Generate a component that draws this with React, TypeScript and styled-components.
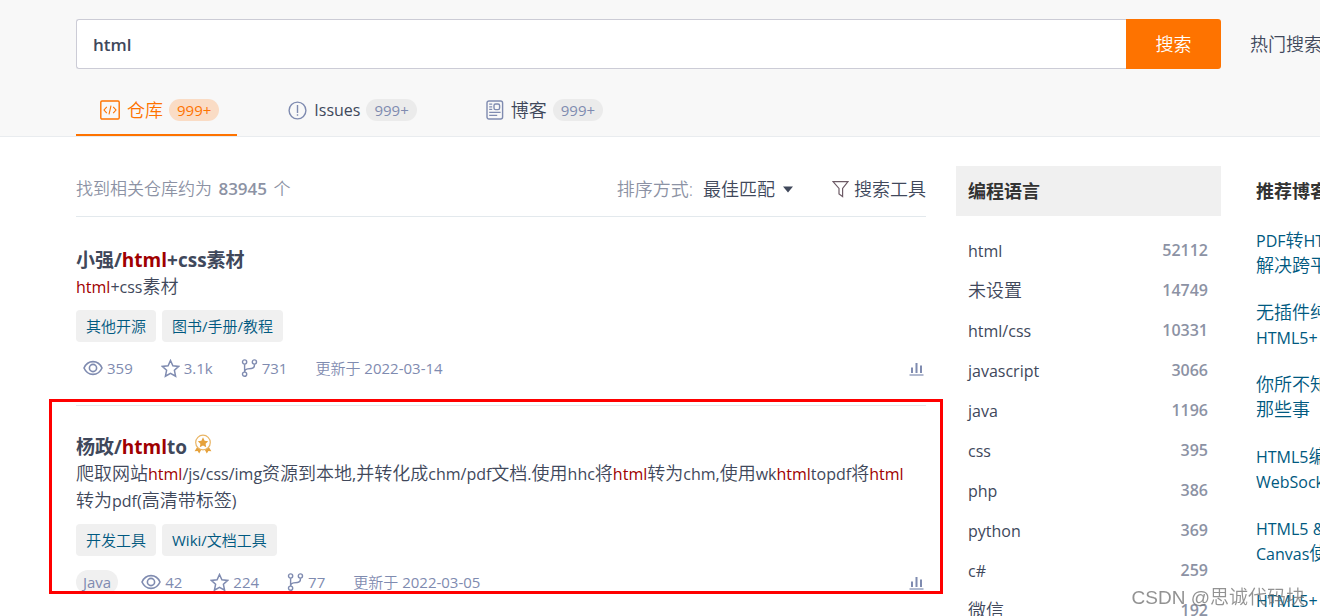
import React from "react";
import styled, { createGlobalStyle } from "styled-components";

const color = {
  ink: "#40485b",
  muted: "#8c92a4",
  slate: "#7f8bb0",
  orange: "#fe7300",
  link: "#005980",
  mark: "#a00000",
  line: "#e3e9ed",
  panel: "#f0f0f0",
};

const GlobalStyle = createGlobalStyle`
  *, *::before, *::after { box-sizing: border-box; }
  body {
    margin: 0;
    height: 100vh;
    overflow: hidden;
    background: #fff;
    color: ${color.ink};
    font-family: "Open Sans", "Noto Sans CJK SC", sans-serif;
    font-size: 18px;
    font-weight: 350;
    line-height: 24px;
  }
  a { color: inherit; text-decoration: none; }
  h2, h3, p, ul { margin: 0; padding: 0; }
  ul { list-style: none; }
  svg { display: block; flex: none; }
  input, button, select { font: inherit; color: inherit; }
`;

const Header = styled.header`
  background: #f8f8f8;
  border-bottom: 1px solid #e9ecef;
  padding: 19px 0 0 76px;
`;

const SearchRow = styled.form`
  display: flex;
  align-items: center;
  margin-bottom: 17px;
`;

const SearchInput = styled.input`
  flex: 1;
  min-width: 0;
  height: 50px;
  padding: 0 16px;
  border: 1px solid #ccccd6;
  border-right: 0;
  border-radius: 3px 0 0 3px;
  background: #fff;
  font-size: 17px;
  font-weight: 600;
  outline: none;
`;

const SearchButton = styled.button`
  width: 95px;
  height: 50px;
  padding: 0;
  border: 0;
  border-radius: 0 3px 3px 0;
  background: ${color.orange};
  color: #fff;
`;

const HotSearch = styled.span`
  flex: 0 0 70px;
  margin-left: 29px;
  overflow: hidden;
  white-space: nowrap;
`;

const Tabs = styled.nav`
  display: flex;
  gap: 27px;
`;

const Tab = styled.a<{ $active?: boolean }>`
  display: flex;
  align-items: center;
  height: 50px;
  padding: 0 18px 0 24px;
  border-bottom: 2px solid ${(p) => (p.$active ? color.orange : "transparent")};
  color: ${(p) => (p.$active ? color.orange : color.ink)};
  svg { color: ${(p) => (p.$active ? color.orange : color.slate)}; margin-right: 7px; }
`;

const Pill = styled.span<{ $active?: boolean }>`
  margin-left: 6px;
  padding: 0 8px;
  border-radius: 11px;
  background: ${(p) => (p.$active ? "#fadcc5" : "#ebebeb")};
  color: ${(p) => (p.$active ? color.orange : color.slate)};
  font-size: 15px;
  font-weight: 400;
  line-height: 22px;
`;

const Latin = styled.span<{ $size: number }>`
  font-size: ${(p) => p.$size}px;
  font-weight: 400;
  line-height: 1;
`;

const Page = styled.div`
  display: grid;
  grid-template-columns: minmax(0, 1fr) 265px 99px;
  align-items: start;
  padding-left: 76px;
`;

const Results = styled.main`
  margin-right: 30px;
`;

const ResultsBar = styled.div`
  display: flex;
  align-items: center;
  height: 80px;
  padding-top: 24px;
  border-bottom: 1px solid ${color.line};
`;

const Found = styled.p`
  flex: 1;
  color: ${color.muted};
  font-size: 17px;
  b { margin: 0 2px; font-weight: 600; }
`;

const SortLabel = styled.label`
  display: flex;
  align-items: center;
  color: ${color.muted};
`;

const SortSelect = styled.select`
  appearance: none;
  margin-left: 10px;
  padding: 0;
  border: 0;
  background: transparent;
  color: ${color.ink};
`;

const Caret = styled.span`
  margin-left: 7px;
`;

const ToolButton = styled.button`
  display: flex;
  align-items: center;
  gap: 5px;
  margin-left: 38px;
  padding: 0;
  border: 0;
  background: none;
  svg { color: #6d5b66; }
`;

const Result = styled.article`
  padding-top: 30px;
`;

/* Outlined result: the frame reaches past the text column on both sides. */
const Framed = styled.section`
  height: 195px;
  margin: 19px -17px 0 -27px;
  padding: 3px 14px 0 24px;
  border: 3px solid #f00;
  overflow: hidden;
`;

const FramedResult = styled(Result)`
  border-top: 1px solid ${color.line};
  padding-top: 28px;
`;

const Title = styled.h3`
  display: flex;
  align-items: flex-start;
  gap: 7px;
  font-size: 19px;
  font-weight: 700;
  line-height: 26px;
`;

const Mark = styled.em`
  color: ${color.mark};
  font-style: normal;
`;

const Description = styled.p`
  padding-right: 8px;
  line-height: 27px;
`;

const TagList = styled.div`
  display: flex;
  gap: 6px;
  margin-top: 10px;
`;

const Tag = styled.a`
  height: 32px;
  padding: 0 10px;
  border-radius: 4px;
  background: ${color.panel};
  color: ${color.link};
  font-size: 15px;
  line-height: 32px;
`;

const Meta = styled.div`
  display: flex;
  align-items: center;
  gap: 28px;
  height: 24px;
  margin-top: 14px;
  color: ${color.slate};
  font-size: 15px;
`;

const Stat = styled.span<{ $indent?: number }>`
  display: flex;
  align-items: center;
  gap: 4px;
  margin-left: ${(p) => p.$indent ?? 0}px;
  font-weight: 400;
`;

const Language = styled.span`
  padding: 0 7px;
  border-radius: 12px;
  background: ${color.panel};
  font-weight: 400;
  line-height: 24px;
`;

const ChartLink = styled.a`
  margin-left: auto;
  margin-right: 2px;
`;

const Side = styled.aside`
  padding-top: 29px;
`;

const SideTitle = styled.h2`
  padding: 0 12px;
  background: ${color.panel};
  color: #333;
  font-size: 18px;
  font-weight: 700;
  line-height: 50px;
`;

const LanguageList = styled.ul`
  margin-top: 14px;
`;

const LanguageItem = styled.li`
  display: flex;
  align-items: center;
  justify-content: space-between;
  height: 40px;
  padding: 0 13px 0 12px;
`;

const Count = styled.span`
  color: ${color.muted};
  font-size: 16px;
  font-weight: 600;
`;

const Blogs = styled.aside`
  margin-left: 35px;
  padding-top: 29px;
  overflow: hidden;
  white-space: nowrap;
`;

const BlogTitle = styled.h2`
  margin-bottom: 12px;
  color: #333;
  font-size: 18px;
  font-weight: 700;
  line-height: 50px;
`;

const BlogLink = styled.a`
  display: block;
  margin-bottom: 22px;
  color: ${color.link};
`;

const BlogLine = styled.span`
  display: block;
  height: 25px;
  line-height: 25px;
`;

const Watermark = styled.div`
  position: fixed;
  right: 15px;
  bottom: 6px;
  color: rgba(110, 110, 110, 0.75);
  font-family: "Liberation Sans", "Noto Sans CJK SC", sans-serif;
  font-size: 19px;
`;

const line = { fill: "none", stroke: "currentColor" } as const;

const CodeIcon = () => (
  <svg width="20" height="20" viewBox="0 0 20 20" {...line} strokeWidth="1.4">
    <rect x="0.8" y="1" width="18.4" height="18" rx="1.2" />
    <path d="M6.800 6.800 4 10l2.800 3.200M13.200 6.800 16 10l-2.800 3.200M11 5.600 9 14.400" strokeWidth="1.1" />
  </svg>
);
const IssueIcon = () => (
  <svg width="19" height="19" viewBox="0 0 19 19" {...line} strokeWidth="1.4">
    <circle cx="9.5" cy="9.5" r="8.4" />
    <path d="M9.5 4v8M9.5 13.200v1.600" />
  </svg>
);
const BlogIcon = () => (
  <svg width="18" height="20" viewBox="0 0 18 20" {...line} strokeWidth="1.4">
    <rect x="1" y="1" width="15.6" height="18" rx="2" />
    <rect x="8" y="4" width="5.6" height="5.6" rx="1.6" />
    <path d="M3.200 4.200h3M3.200 6.800h3M3.200 9.400h3M3.200 12.400h11.400M3.200 15.400h8" strokeWidth="1.3" />
  </svg>
);
const CaretIcon = () => (
  <svg width="12" height="8" viewBox="0 0 12 8" fill={color.ink}>
    <path d="M1 1.500h10L6 7.500z" />
  </svg>
);
const FilterIcon = () => (
  <svg width="17" height="18" viewBox="0 0 17 18" {...line} strokeWidth="1.2">
    <path d="M1 1.600h15L10.600 8.400V16.600L7 14V8.400z" />
  </svg>
);
const EyeIcon = () => (
  <svg width="20" height="16" viewBox="0 0 20 16" {...line} strokeWidth="1.6">
    <path d="M1 8c1.800-4 5.200-6.400 9-6.400S17.200 4 19 8c-1.800 4-5.200 6.400-9 6.400S2.800 12 1 8z" />
    <circle cx="10" cy="8" r="3.6" />
  </svg>
);
const StarIcon = () => (
  <svg width="19" height="19" viewBox="0 0 19 19" {...line} strokeWidth="1.5">
    <path d="M9.500 1.500 11.900 6.800 17.700 7.400 13.400 11.300 14.600 17.200 9.500 14.300 4.400 17.200 5.600 11.300 1.300 7.400 7.100 6.800z" />
  </svg>
);
const ForkIcon = () => (
  <svg width="17" height="18" viewBox="0 0 17 18" {...line} strokeWidth="1.4">
    <circle cx="3.6" cy="3" r="2.1" />
    <circle cx="13.4" cy="3" r="2.1" />
    <circle cx="3.6" cy="15.2" r="2.1" />
    <path d="M3.600 5.200v7.800M13.400 5.200v1.300c0 2-1 2.800-3 3l-3.800.4c-1.800.2-3 1.200-3 3.100" />
  </svg>
);
const ChartIcon = () => (
  <svg width="15" height="15" viewBox="0 0 15 15" {...line} strokeWidth="2">
    <path d="M3 6.500V12M7.500 2V12M12 4.500V12" />
    <path d="M0.500 14h14" strokeWidth="1.2" />
  </svg>
);
const MedalIcon = () => (
  <svg width="18" height="20" viewBox="0 0 18 20">
    <path d="M3.500 12.500.6 17.300l3-.2 1.600 2.500 2.300-4.300M14.500 12.500l2.900 4.800-3-.2-1.600 2.500-2.300-4.300" fill="#e6a23c" />
    <circle cx="9" cy="8.500" r="7.300" fill="#fff" stroke="#e9b565" strokeWidth="1.2" />
    <path d="M9 3.300 10.600 6.700 14.200 7.200 11.600 9.700 12.200 13.300 9 11.600 5.800 13.300 6.400 9.700 3.800 7.200 7.400 6.700z" fill="#e6a23c" />
  </svg>
);

const languages: [string, string][] = [
  ["html", "52112"],
  ["未设置", "14749"],
  ["html/css", "10331"],
  ["javascript", "3066"],
  ["java", "1196"],
  ["css", "395"],
  ["php", "386"],
  ["python", "369"],
  ["c#", "259"],
  ["微信", "192"],
];

const blogs: string[][] = [
  ["PDF转HTML", "解决跨平台"],
  ["无插件纯", "HTML5+"],
  ["你所不知", "那些事（"],
  ["HTML5编", "WebSocket"],
  ["HTML5 &", "Canvas使"],
  ["HTML5+"],
];

/* Latin runs are set smaller and a little heavier than the Chinese text around them. */
const Mixed = ({ text, size = 16 }: { text: string; size?: number }) => (
  <>
    {text.split(/([\x20-\x7e]+)/).map((part, i) =>
      i % 2 ? <Latin key={i} $size={size}>{part}</Latin> : part
    )}
  </>
);

const Highlighted = ({ text }: { text: string }) => (
  <>
    {text.split(/(html)/).map((part, i) =>
      i % 2 ? <Mark key={i}><Mixed text={part} /></Mark> : <Mixed key={i} text={part} />
    )}
  </>
);

type StatsProps = { language?: string; views: string; stars: string; forks: string; date: string };

const Stats = ({ language, views, stars, forks, date }: StatsProps) => (
  <Meta>
    {language && <Language>{language}</Language>}
    <Stat $indent={language ? -5 : 7}><EyeIcon />{views}</Stat>
    <Stat><StarIcon />{stars}</Stat>
    <Stat><ForkIcon />{forks}</Stat>
    <span><Mixed text={`更新于 ${date}`} size={15} /></span>
    <ChartLink href="#" aria-label="统计"><ChartIcon /></ChartLink>
  </Meta>
);

const App = () => (
  <>
    <GlobalStyle />
    <Header>
      <SearchRow onSubmit={(e) => e.preventDefault()}>
        <SearchInput aria-label="搜索" defaultValue="html" />
        <SearchButton type="submit">搜索</SearchButton>
        <HotSearch>热门搜索</HotSearch>
      </SearchRow>
      <Tabs>
        <Tab href="#" $active><CodeIcon />仓库<Pill $active>999+</Pill></Tab>
        <Tab href="#"><IssueIcon /><Mixed text="Issues" /><Pill>999+</Pill></Tab>
        <Tab href="#"><BlogIcon />博客<Pill>999+</Pill></Tab>
      </Tabs>
    </Header>
    <Page>
      <Results>
        <ResultsBar>
          <Found>找到相关仓库约为 <b>83945</b> 个</Found>
          <SortLabel>
            排序方式:
            <SortSelect defaultValue="best">
              <option value="best">最佳匹配</option>
            </SortSelect>
            <Caret><CaretIcon /></Caret>
          </SortLabel>
          <ToolButton type="button"><FilterIcon />搜索工具</ToolButton>
        </ResultsBar>
        <Result>
          <Title><a href="#">小强/<Mark>html</Mark>+css素材</a></Title>
          <Description><Highlighted text="html+css素材" /></Description>
          <TagList>
            <Tag href="#">其他开源</Tag>
            <Tag href="#"><Mixed text="图书/手册/教程" size={15} /></Tag>
          </TagList>
          <Stats views="359" stars="3.1k" forks="731" date="2022-03-14" />
        </Result>
        <Framed>
          <FramedResult>
            <Title><a href="#">杨政/<Mark>html</Mark>to</a><MedalIcon /></Title>
            <Description>
              <Highlighted text="爬取网站html/js/css/img资源到本地,并转化成chm/pdf文档.使用hhc将html转为chm,使用wkhtmltopdf将html转为pdf(高清带标签)" />
            </Description>
            <TagList>
              <Tag href="#">开发工具</Tag>
              <Tag href="#"><Mixed text="Wiki/文档工具" size={15} /></Tag>
            </TagList>
            <Stats language="Java" views="42" stars="224" forks="77" date="2022-03-05" />
          </FramedResult>
        </Framed>
      </Results>
      <Side>
        <SideTitle>编程语言</SideTitle>
        <LanguageList>
          {languages.map(([name, count]) => (
            <LanguageItem key={name}>
              <a href="#"><Mixed text={name} /></a>
              <Count>{count}</Count>
            </LanguageItem>
          ))}
        </LanguageList>
      </Side>
      <Blogs>
        <BlogTitle>推荐博客</BlogTitle>
        {blogs.map((lines) => (
          <BlogLink key={lines.join()} href="#">
            {lines.map((l) => <BlogLine key={l}><Mixed text={l} /></BlogLine>)}
          </BlogLink>
        ))}
      </Blogs>
    </Page>
    <Watermark>CSDN @思诚代码块</Watermark>
  </>
);

export default App;
